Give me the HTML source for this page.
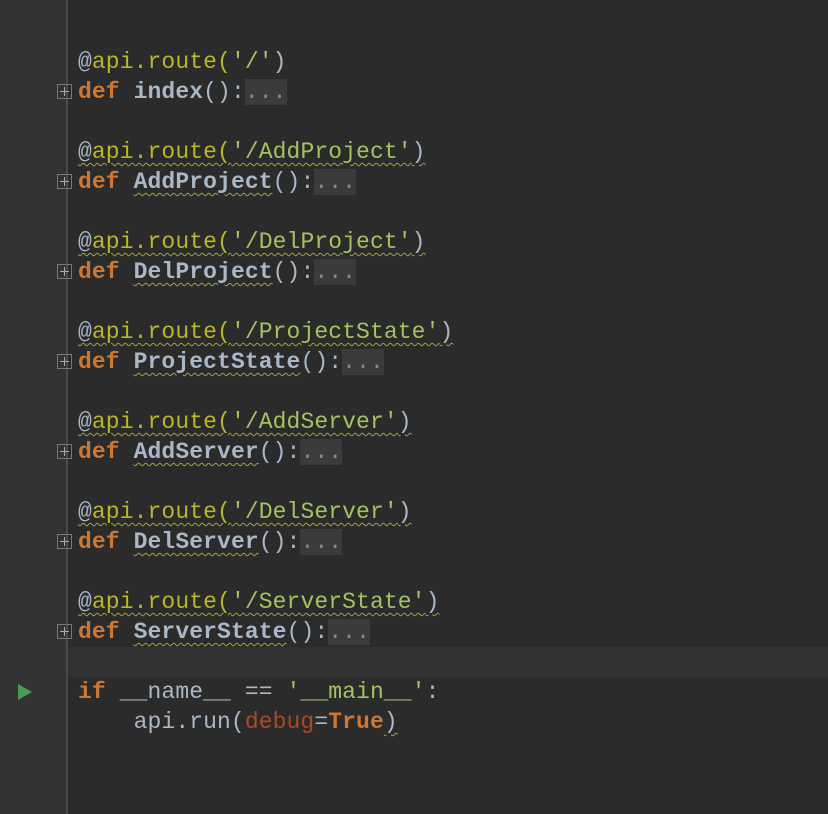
<!DOCTYPE html>
<html><head><meta charset="utf-8"><style>
body{margin:0;width:828px;height:814px;background:#2b2b2b;overflow:hidden;position:relative;font-family:"Liberation Mono",monospace;}
.gut{position:absolute;left:0;top:0;width:66px;height:814px;background:#313335;}
.gl{position:absolute;left:66px;top:0;width:2px;height:814px;background:#4a4a4a;}
.cur{position:absolute;left:68px;top:647px;width:760px;height:30px;background:#323232;}
.ln{position:absolute;left:78px;height:30px;line-height:30px;font-size:23px;letter-spacing:0.1px;color:#a9b7c6;white-space:pre;}
.k{color:#cc7832;font-weight:bold}
.d{color:#bbb529}
.s{color:#a5c261}
.f{font-weight:bold}
.w{text-decoration:underline wavy #a3a33a;text-decoration-thickness:1px;text-underline-offset:4px}
.fold{background:#3b3b3b;color:#888;}
.kw{color:#aa4926}
.pl{position:absolute;left:57px;width:15px;height:15px;border:1px solid #777;box-sizing:border-box;}
.pl:before{content:"";position:absolute;left:2px;top:6px;width:9px;height:1px;background:#aaa}
.pl:after{content:"";position:absolute;left:6px;top:2px;width:1px;height:9px;background:#aaa}
.run{position:absolute;left:18px;top:684px;width:0;height:0;border-left:14px solid #499c54;border-top:8px solid transparent;border-bottom:8px solid transparent;}
</style></head><body>
<div class="gut"></div><div class="gl"></div><div class="cur"></div>
<div class="ln" style="top:47px"><span>@</span><span class="d">api.route(</span><span class="s">'/'</span>)</div>
<div class="ln" style="top:77px"><span class="k">def</span> <span class="f">index</span>():<span class="fold">...</span></div>
<div class="pl" style="top:84px"></div>

<div class="ln" style="top:137px"><span class="w">@<span class="d">api.route(</span><span class="s">'/AddProject'</span>)</span></div>
<div class="ln" style="top:167px"><span class="k">def</span> <span class="f w">AddProject</span>():<span class="fold">...</span></div>
<div class="pl" style="top:174px"></div>

<div class="ln" style="top:227px"><span class="w">@<span class="d">api.route(</span><span class="s">'/DelProject'</span>)</span></div>
<div class="ln" style="top:257px"><span class="k">def</span> <span class="f w">DelProject</span>():<span class="fold">...</span></div>
<div class="pl" style="top:264px"></div>

<div class="ln" style="top:317px"><span class="w">@<span class="d">api.route(</span><span class="s">'/ProjectState'</span>)</span></div>
<div class="ln" style="top:347px"><span class="k">def</span> <span class="f w">ProjectState</span>():<span class="fold">...</span></div>
<div class="pl" style="top:354px"></div>

<div class="ln" style="top:407px"><span class="w">@<span class="d">api.route(</span><span class="s">'/AddServer'</span>)</span></div>
<div class="ln" style="top:437px"><span class="k">def</span> <span class="f w">AddServer</span>():<span class="fold">...</span></div>
<div class="pl" style="top:444px"></div>

<div class="ln" style="top:497px"><span class="w">@<span class="d">api.route(</span><span class="s">'/DelServer'</span>)</span></div>
<div class="ln" style="top:527px"><span class="k">def</span> <span class="f w">DelServer</span>():<span class="fold">...</span></div>
<div class="pl" style="top:534px"></div>

<div class="ln" style="top:587px"><span class="w">@<span class="d">api.route(</span><span class="s">'/ServerState'</span>)</span></div>
<div class="ln" style="top:617px"><span class="k">def</span> <span class="f w">ServerState</span>():<span class="fold">...</span></div>
<div class="pl" style="top:624px"></div>

<div class="run"></div>
<div class="ln" style="top:677px"><span class="k">if</span> __name__ == <span class="s">'__main__'</span>:</div>
<div class="ln" style="top:707px">    api.run(<span class="kw">debug</span>=<span class="k">True</span><span class="w">)</span></div>
</body></html>
